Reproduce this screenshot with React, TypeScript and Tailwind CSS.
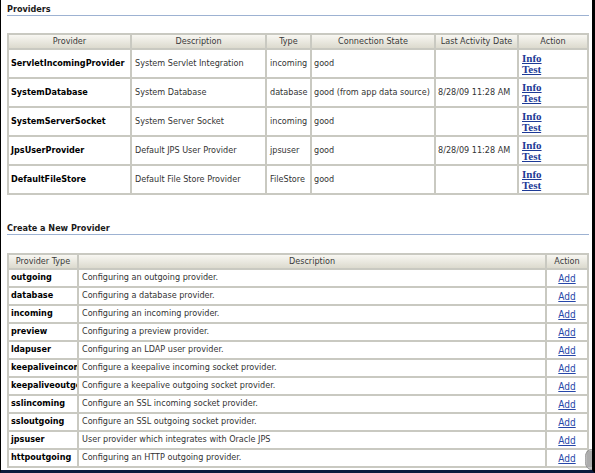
import React from "react";

const t1 = [
  ["ServletIncomingProvider", "System Servlet Integration", "incoming", "good", ""],
  ["SystemDatabase", "System Database", "database", "good (from app data source)", "8/28/09 11:28 AM"],
  ["SystemServerSocket", "System Server Socket", "incoming", "good", ""],
  ["JpsUserProvider", "Default JPS User Provider", "jpsuser", "good", "8/28/09 11:28 AM"],
  ["DefaultFileStore", "Default File Store Provider", "FileStore", "good", ""],
];

const t2 = [
  ["outgoing", "Configuring an outgoing provider."],
  ["database", "Configuring a database provider."],
  ["incoming", "Configuring an incoming provider."],
  ["preview", "Configuring a preview provider."],
  ["ldapuser", "Configuring an LDAP user provider."],
  ["keepaliveincoming", "Configure a keepalive incoming socket provider."],
  ["keepaliveoutgoing", "Configure a keepalive outgoing socket provider."],
  ["sslincoming", "Configure an SSL incoming socket provider."],
  ["ssloutgoing", "Configure an SSL outgoing socket provider."],
  ["jpsuser", "User provider which integrates with Oracle JPS"],
  ["httpoutgoing", "Configuring an HTTP outgoing provider."],
];

function Head({ children }: { children: React.ReactNode }) {
  return (
    <div className="h-[13px] flex items-center justify-center bg-linear-to-b from-[#f8f7f2] to-[#dcdace] text-[#3a3a3a] leading-[11px] whitespace-nowrap overflow-hidden">
      {children}
    </div>
  );
}

function Section({ title }: { title: string }) {
  return (
    <div className="h-[12px] border-b border-[#9db2d2] font-bold text-[#1a1a1a] leading-[11px]">
      {title}
    </div>
  );
}

export default function App() {
  return (
    <div className="relative w-[595px] h-[473px] bg-white border-l border-black border-r-[3px] border-b-[3px] border-b-[#0b1a3c] pl-[6px] pr-[3px] pt-[4px] overflow-hidden font-['DejaVu_Sans_Condensed','Liberation_Sans',sans-serif] text-[9px] text-[#333]">
      <Section title="Providers" />

      <div className="mt-[17px] grid grid-cols-[121px_133px_43px_122px_81px_68px] gap-[2px] p-[2px] bg-[#c9c9c1]">
        <Head>Provider</Head>
        <Head>Description</Head>
        <Head>Type</Head>
        <Head>Connection State</Head>
        <Head>Last Activity Date</Head>
        <Head>Action</Head>
        {t1.map((r) => (
          <React.Fragment key={r[0]}>
            <div className="h-[27px] bg-white flex items-center px-[2px] font-bold text-black whitespace-nowrap overflow-hidden">{r[0]}</div>
            <div className="h-[27px] bg-white flex items-center px-[3px] whitespace-nowrap overflow-hidden">{r[1]}</div>
            <div className="h-[27px] bg-white flex items-center px-[3px] whitespace-nowrap overflow-hidden">{r[2]}</div>
            <div className="h-[27px] bg-white flex items-center px-[2px] whitespace-nowrap overflow-hidden">{r[3]}</div>
            <div className="h-[27px] bg-white flex items-center px-[2px] whitespace-nowrap overflow-hidden">{r[4]}</div>
            <div className="h-[27px] bg-white flex flex-col justify-center px-[3px] font-['Liberation_Serif',serif] font-bold text-[11px] leading-[11px] text-[#1d3a96]">
              <a className="underline w-fit" href="#">Info</a>
              <a className="underline w-fit" href="#">Test</a>
            </div>
          </React.Fragment>
        ))}
      </div>

      <div className="mt-[28px]">
        <Section title="Create a New Provider" />
      </div>

      <div className="mt-[18px] grid grid-cols-[68px_466px_40px] gap-[2px] p-[2px] bg-[#c9c9c1]">
        <Head>Provider Type</Head>
        <Head>Description</Head>
        <Head>Action</Head>
        {t2.map((r) => (
          <React.Fragment key={r[0]}>
            <div className="h-[16px] bg-white flex items-center px-[2px] font-bold text-black whitespace-nowrap overflow-hidden text-clip">{r[0]}</div>
            <div className="h-[16px] bg-white flex items-center px-[3px] whitespace-nowrap overflow-hidden">{r[1]}</div>
            <div className="h-[16px] bg-white flex items-center justify-center">
              <a className="underline text-[10px] font-medium text-[#2747a8]" href="#">Add</a>
            </div>
          </React.Fragment>
        ))}
      </div>

      <svg className="absolute left-[584px] top-[449px]" width="8" height="21" viewBox="0 0 8 21">
        <path d="M8 0 C2 0 0 5 0 10.5 C0 16 2 21 8 21 Z" fill="#c4c4c4" stroke="#888" strokeWidth="0.8" />
        {[3, 5, 7, 9, 11, 13, 15, 17].map((y) => (
          <line key={y} x1="1.5" x2="8" y1={y} y2={y} stroke="#777" strokeWidth="0.6" />
        ))}
      </svg>
    </div>
  );
}
